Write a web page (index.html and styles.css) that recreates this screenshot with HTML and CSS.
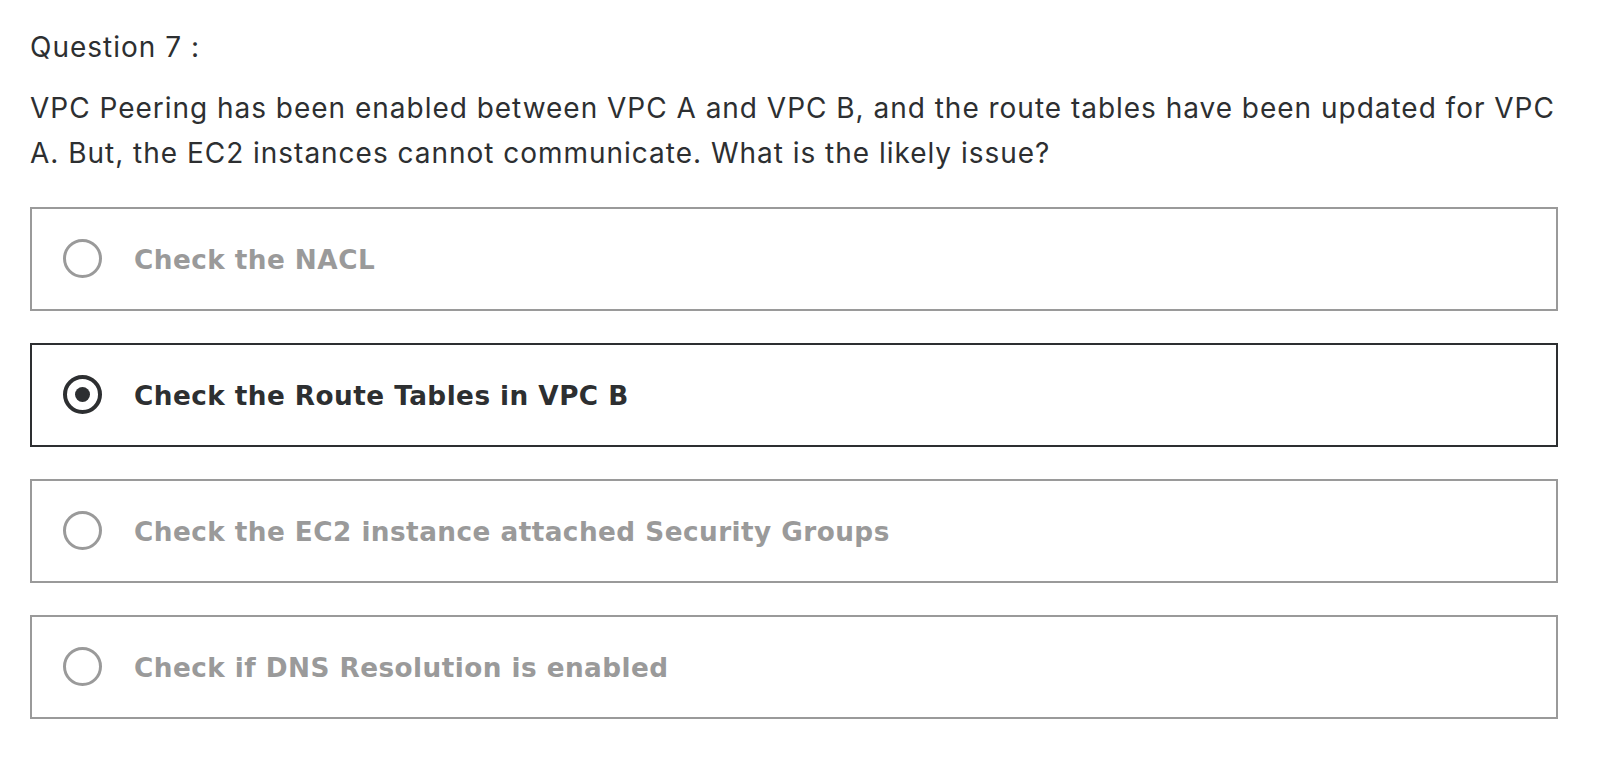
FILE: index.html
```html
<!DOCTYPE html>
<html lang="en">
<head>
<meta charset="utf-8">
<title>Question 7</title>
<link rel="stylesheet" href="styles.css">
</head>
<body>
<main class="quiz">
  <div class="q-label">Question 7 :</div>
  <p class="q-text">VPC Peering has been enabled between VPC A and VPC B, and the route tables have been updated for VPC A. But, the EC2 instances cannot communicate. What is the likely issue?</p>
  <ul class="options">
    <li class="option">
      <span class="radio"></span>
      <span class="opt-text">Check the NACL</span>
    </li>
    <li class="option selected">
      <span class="radio"><span class="dot"></span></span>
      <span class="opt-text">Check the Route Tables in VPC B</span>
    </li>
    <li class="option">
      <span class="radio"></span>
      <span class="opt-text">Check the EC2 instance attached Security Groups</span>
    </li>
    <li class="option">
      <span class="radio"></span>
      <span class="opt-text">Check if DNS Resolution is enabled</span>
    </li>
  </ul>
</main>
</body>
</html>
```

FILE: styles.css
```css
* { box-sizing: border-box; }

html, body {
  margin: 0;
  padding: 0;
  background: #ffffff;
}

body {
  font-family: Inter, "Noto Sans", "Liberation Sans", sans-serif;
  color: #2d2f31;
}

.quiz {
  width: 1528px;
  margin-left: 30px;
  padding-top: 25px;
}

.q-label {
  font-size: 28px;
  line-height: 45px;
  font-weight: 400;
  letter-spacing: 1px;
}

.q-text {
  margin: 16px 0 0 0;
  font-size: 28px;
  line-height: 44.8px;
  font-weight: 400;
  letter-spacing: 0.98px;
}

.options {
  list-style: none;
  margin: 31px 0 0 0;
  padding: 0;
  display: flex;
  flex-direction: column;
  gap: 32px;
}

.option {
  height: 104px;
  border: 2px solid #9a9a9a;
  display: flex;
  align-items: center;
  padding: 0 0 0 31px;
  gap: 32px;
  color: #9a9a9a;
}

.option.selected {
  border-color: #2d2f31;
  color: #2d2f31;
}

.radio {
  width: 39px;
  height: 39px;
  border: 3px solid #9a9a9a;
  border-radius: 50%;
  flex: none;
  display: flex;
  align-items: center;
  justify-content: center;
}

.option.selected .radio {
  border: 4px solid #2d2f31;
}

.dot {
  width: 15px;
  height: 15px;
  border-radius: 50%;
  background: #2d2f31;
}

.opt-text {
  font-family: "DejaVu Sans", Inter, sans-serif;
  font-size: 26.3px;
  font-weight: 700;
  line-height: 1.2;
  letter-spacing: 0.45px;
  padding-top: 4px;
}
```
